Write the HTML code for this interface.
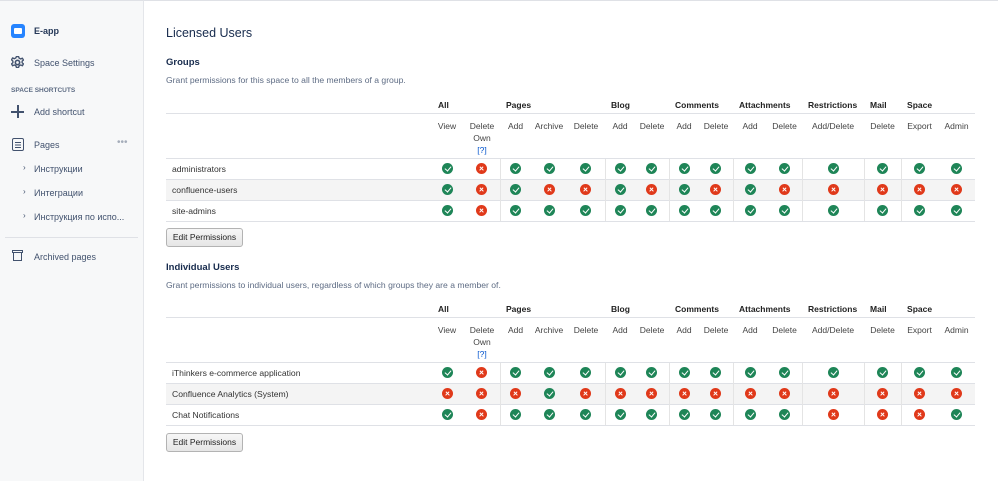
<!DOCTYPE html>
<html><head><meta charset="utf-8">
<style>
*{margin:0;padding:0;box-sizing:border-box}
body{width:998px;height:481px;overflow:hidden;background:#fff;font-family:"Liberation Sans","Noto Sans CJK SC",sans-serif;color:#172b4d;position:relative}
.sb{position:absolute;left:0;top:0;width:144px;height:481px;background:#f7f8f9;border-right:1px solid #e4e6ea;border-top:1px solid #dfe1e6}
.topline{position:absolute;left:144px;top:0;right:0;height:1px;background:#dfe1e6}
.si{position:absolute;left:34px;font-size:9px;color:#42526e}
.ic{position:absolute;left:11px}
h1{position:absolute;left:166px;top:26px;font-size:12.5px;font-weight:normal;color:#172b4d}
h2{position:absolute;left:166px;font-size:9.5px;font-weight:bold;color:#172b4d}
.d{position:absolute;left:166px;font-size:8.6px;color:#5e6c84}
table{position:absolute;left:166px;width:809px;border-collapse:collapse;table-layout:fixed;font-size:8.5px;color:#333}
th.g{font-weight:bold;text-align:left;padding-left:6px;height:16px;border-bottom:1px solid #dfe1e6;vertical-align:middle;color:#222}
td.s{text-align:center;vertical-align:top;padding-top:6px;height:45px;line-height:12px;color:#444}
tr.r td{height:21px;border-top:1px solid #dfe1e6;text-align:center;vertical-align:middle}
tr.r td:first-child{text-align:left;padding-left:6px;font-size:8.6px;color:#333}
tr.r:last-child td{border-bottom:1px solid #dfe1e6}
tr.alt td{background:#f4f4f4}
.b{border-left:1px solid #e4e4e4}
.q{color:#0052cc}
.y,.n{display:inline-block;width:11px;height:11px;border-radius:50%;position:relative;vertical-align:middle}
.y{background:#1e8557}
.y::after{content:"";position:absolute;left:4px;top:2px;width:3px;height:5px;border:solid #fff;border-width:0 1.5px 1.5px 0;transform:rotate(40deg)}
.n{background:#e0391a}
.n::before,.n::after{content:"";position:absolute;left:3px;top:5px;width:5px;height:1.4px;background:#fff;transform:rotate(45deg)}
.n::after{transform:rotate(-45deg)}
.btn{position:absolute;left:166px;width:77px;height:19px;border:1px solid #b3b3b3;border-radius:3px;background:linear-gradient(#f7f7f7,#e6e6e6);font-size:8.5px;color:#222;text-align:center;line-height:17px}
</style></head><body>
<div class="sb">
  <div style="position:absolute;left:11px;top:23px;width:14px;height:14px;border-radius:3px;background:#2684ff"><div style="position:absolute;left:3px;top:4px;width:8px;height:6px;background:#fff;border-radius:1px"></div></div>
  <div class="si" style="top:25px;font-weight:bold;color:#253858">E-app</div>
  <svg class="ic" style="top:55px" width="13" height="13" viewBox="0 0 24 24"><path d="M12 8a4 4 0 1 0 0 8 4 4 0 0 0 0-8z" fill="none" stroke="#42526e" stroke-width="3"/><path d="M10 1h4l1 3 3 1.5 3-1.5 2 3.5-2.5 2v3l2.5 2-2 3.5-3-1.5-3 1.5-1 3h-4l-1-3-3-1.5-3 1.5-2-3.5 2.5-2v-3L1 7l2-3.5 3 1.5 3-1.5z" fill="none" stroke="#42526e" stroke-width="2.5" stroke-linejoin="round"/></svg>
  <div class="si" style="top:57px">Space Settings</div>
  <div class="si" style="left:11px;top:86px;font-size:6.5px;font-weight:bold;color:#5e6c84">SPACE SHORTCUTS</div>
  <div style="position:absolute;left:11px;top:110px;width:13px;height:1.5px;background:#42526e"></div>
  <div style="position:absolute;left:17px;top:104px;width:1.5px;height:13px;background:#42526e"></div>
  <div class="si" style="top:106px">Add shortcut</div>
  <div style="position:absolute;left:12px;top:137px;width:12px;height:13px;border:1.5px solid #42526e;border-radius:2px"></div>
  <div style="position:absolute;left:15px;top:141px;width:6px;height:1.2px;background:#42526e;box-shadow:0 2.5px 0 #42526e,0 5px 0 #42526e"></div>
  <div class="si" style="top:139px">Pages</div>
  <div class="si" style="left:117px;top:136px;color:#a5adba;font-size:10px">•••</div>
  <div class="si" style="left:23px;top:162px;font-size:8px">›</div><div class="si" style="top:163px">Инструкции</div>
  <div class="si" style="left:23px;top:186px;font-size:8px">›</div><div class="si" style="top:187px">Интеграции</div>
  <div class="si" style="left:23px;top:210px;font-size:8px">›</div><div class="si" style="top:211px">Инструкция по испо...</div>
  <div style="position:absolute;left:5px;top:236px;width:133px;height:1px;background:#dfe1e6"></div>
  <div style="position:absolute;left:12px;top:249px;width:11px;height:3px;border:1.3px solid #42526e"></div>
  <div style="position:absolute;left:13px;top:252px;width:9px;height:8px;border:1.3px solid #42526e;border-top:none"></div>
  <div class="si" style="top:251px">Archived pages</div>
</div>
<div class="topline"></div>

<h1>Licensed Users</h1>
<h2 style="top:57px">Groups</h2>
<div class="d" style="top:75px">Grant permissions for this space to all the members of a group.</div>

<table style="top:97px">
<colgroup><col style="width:264px"><col style="width:34px"><col style="width:36px"><col style="width:31px"><col style="width:36px"><col style="width:38px"><col style="width:30px"><col style="width:34px"><col style="width:30px"><col style="width:34px"><col style="width:34px"><col style="width:35px"><col style="width:62px"><col style="width:37px"><col style="width:37px"><col style="width:37px"></colgroup>
<tr><th class="g"></th><th class="g" colspan="2" style="padding-left:8px">All</th><th class="g" colspan="3">Pages</th><th class="g" colspan="2">Blog</th><th class="g" colspan="2">Comments</th><th class="g" colspan="2">Attachments</th><th class="g">Restrictions</th><th class="g">Mail</th><th class="g" colspan="2">Space</th></tr>
<tr><td></td><td class="s">View</td><td class="s">Delete<br>Own<br><span class="q">[?]</span></td><td class="s">Add</td><td class="s">Archive</td><td class="s">Delete</td><td class="s">Add</td><td class="s">Delete</td><td class="s">Add</td><td class="s">Delete</td><td class="s">Add</td><td class="s">Delete</td><td class="s">Add/Delete</td><td class="s">Delete</td><td class="s">Export</td><td class="s">Admin</td></tr>
<tr class="r"><td>administrators</td><td><i class="y"></i></td><td><i class="n"></i></td><td class="b"><i class="y"></i></td><td><i class="y"></i></td><td><i class="y"></i></td><td class="b"><i class="y"></i></td><td><i class="y"></i></td><td class="b"><i class="y"></i></td><td><i class="y"></i></td><td class="b"><i class="y"></i></td><td><i class="y"></i></td><td class="b"><i class="y"></i></td><td class="b"><i class="y"></i></td><td class="b"><i class="y"></i></td><td><i class="y"></i></td></tr>
<tr class="r alt"><td>confluence-users</td><td><i class="y"></i></td><td><i class="n"></i></td><td class="b"><i class="y"></i></td><td><i class="n"></i></td><td><i class="n"></i></td><td class="b"><i class="y"></i></td><td><i class="n"></i></td><td class="b"><i class="y"></i></td><td><i class="n"></i></td><td class="b"><i class="y"></i></td><td><i class="n"></i></td><td class="b"><i class="n"></i></td><td class="b"><i class="n"></i></td><td class="b"><i class="n"></i></td><td><i class="n"></i></td></tr>
<tr class="r"><td>site-admins</td><td><i class="y"></i></td><td><i class="n"></i></td><td class="b"><i class="y"></i></td><td><i class="y"></i></td><td><i class="y"></i></td><td class="b"><i class="y"></i></td><td><i class="y"></i></td><td class="b"><i class="y"></i></td><td><i class="y"></i></td><td class="b"><i class="y"></i></td><td><i class="y"></i></td><td class="b"><i class="y"></i></td><td class="b"><i class="y"></i></td><td class="b"><i class="y"></i></td><td><i class="y"></i></td></tr>
</table>
<div class="btn" style="top:228px">Edit Permissions</div>

<h2 style="top:262px">Individual Users</h2>
<div class="d" style="top:280px">Grant permissions to individual users, regardless of which groups they are a member of.</div>

<table style="top:301px">
<colgroup><col style="width:264px"><col style="width:34px"><col style="width:36px"><col style="width:31px"><col style="width:36px"><col style="width:38px"><col style="width:30px"><col style="width:34px"><col style="width:30px"><col style="width:34px"><col style="width:34px"><col style="width:35px"><col style="width:62px"><col style="width:37px"><col style="width:37px"><col style="width:37px"></colgroup>
<tr><th class="g"></th><th class="g" colspan="2" style="padding-left:8px">All</th><th class="g" colspan="3">Pages</th><th class="g" colspan="2">Blog</th><th class="g" colspan="2">Comments</th><th class="g" colspan="2">Attachments</th><th class="g">Restrictions</th><th class="g">Mail</th><th class="g" colspan="2">Space</th></tr>
<tr><td></td><td class="s">View</td><td class="s">Delete<br>Own<br><span class="q">[?]</span></td><td class="s">Add</td><td class="s">Archive</td><td class="s">Delete</td><td class="s">Add</td><td class="s">Delete</td><td class="s">Add</td><td class="s">Delete</td><td class="s">Add</td><td class="s">Delete</td><td class="s">Add/Delete</td><td class="s">Delete</td><td class="s">Export</td><td class="s">Admin</td></tr>
<tr class="r"><td>iThinkers e-commerce application</td><td><i class="y"></i></td><td><i class="n"></i></td><td class="b"><i class="y"></i></td><td><i class="y"></i></td><td><i class="y"></i></td><td class="b"><i class="y"></i></td><td><i class="y"></i></td><td class="b"><i class="y"></i></td><td><i class="y"></i></td><td class="b"><i class="y"></i></td><td><i class="y"></i></td><td class="b"><i class="y"></i></td><td class="b"><i class="y"></i></td><td class="b"><i class="y"></i></td><td><i class="y"></i></td></tr>
<tr class="r alt"><td>Confluence Analytics (System)</td><td><i class="n"></i></td><td><i class="n"></i></td><td class="b"><i class="n"></i></td><td><i class="y"></i></td><td><i class="n"></i></td><td class="b"><i class="n"></i></td><td><i class="n"></i></td><td class="b"><i class="n"></i></td><td><i class="n"></i></td><td class="b"><i class="n"></i></td><td><i class="n"></i></td><td class="b"><i class="n"></i></td><td class="b"><i class="n"></i></td><td class="b"><i class="n"></i></td><td><i class="n"></i></td></tr>
<tr class="r"><td>Chat Notifications</td><td><i class="y"></i></td><td><i class="n"></i></td><td class="b"><i class="y"></i></td><td><i class="y"></i></td><td><i class="y"></i></td><td class="b"><i class="y"></i></td><td><i class="y"></i></td><td class="b"><i class="y"></i></td><td><i class="y"></i></td><td class="b"><i class="y"></i></td><td><i class="y"></i></td><td class="b"><i class="n"></i></td><td class="b"><i class="n"></i></td><td class="b"><i class="n"></i></td><td><i class="y"></i></td></tr>
</table>
<div class="btn" style="top:433px">Edit Permissions</div>
</body></html>
